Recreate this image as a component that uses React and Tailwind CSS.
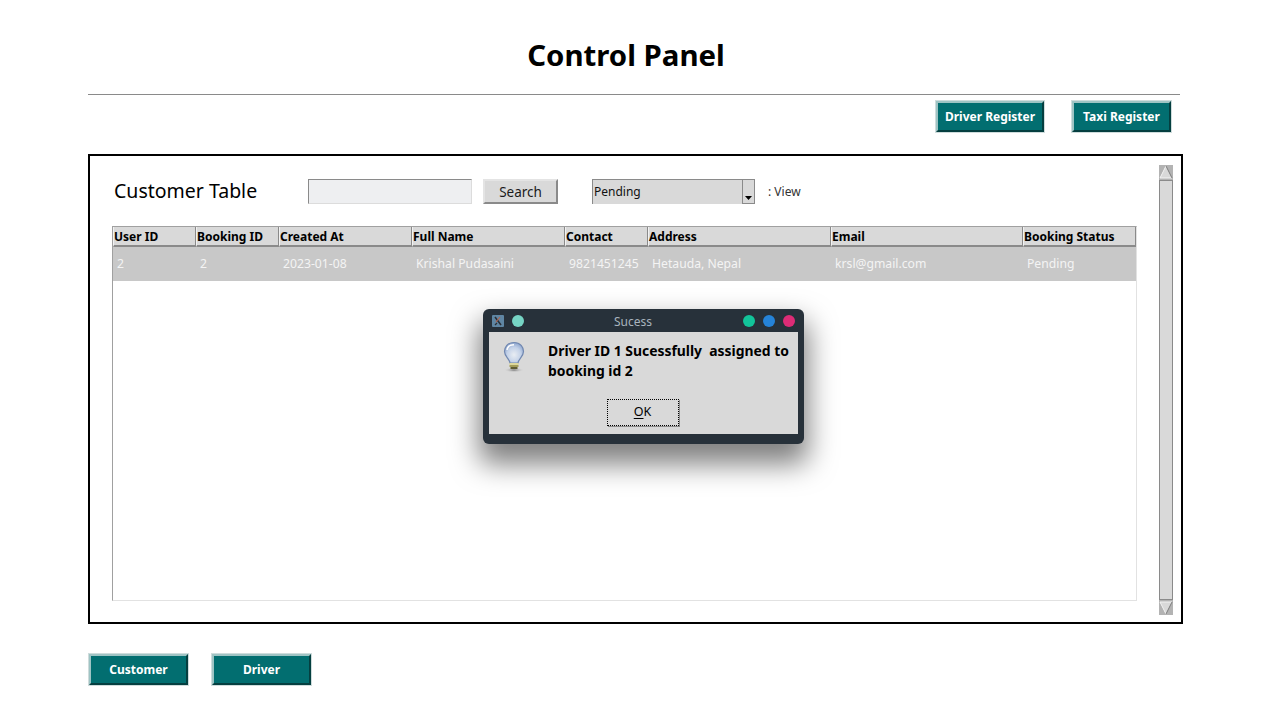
import React from 'react';

const columns = ['User ID', 'Booking ID', 'Created At', 'Full Name', 'Contact', 'Address', 'Email', 'Booking Status'];
const row = ['2', '2', '2023-01-08', 'Krishal Pudasaini', '9821451245', 'Hetauda, Nepal', 'krsl@gmail.com', 'Pending'];
const gridCols = 'grid grid-cols-[83px_83px_133px_153px_83px_183px_192px_113px]';

const TealButton = ({ children, className }) => (
  <button className={`h-[33px] border border-[#cfdcdc] text-[12px] font-bold text-white ${className}`}>
    <span className="flex h-full items-center justify-center border-2 border-t-[#9fc4c4] border-l-[#9fc4c4] border-r-[#053f40] border-b-[#053f40] bg-[#026e70]">
      {children}
    </span>
  </button>
);

const ArrowUp = () => (
  <svg width="14" height="15" viewBox="0 0 14 15" className="block">
    <rect width="14" height="15" fill="#b3b3b3" />
    <polygon points="7,1 13,13 1,13" fill="#d9d9d9" />
    <path d="M7 1 L1 13 H13" fill="none" stroke="#f4f4f4" strokeWidth="1" />
    <path d="M7 1 L13 13" fill="none" stroke="#7d7d7d" strokeWidth="1" />
  </svg>
);

const ArrowDown = () => (
  <svg width="14" height="15" viewBox="0 0 14 15" className="block">
    <rect width="14" height="15" fill="#b3b3b3" />
    <polygon points="1,2 13,2 7,14" fill="#d9d9d9" />
    <path d="M1 2 H13 M1 2 L7 14" fill="none" stroke="#f4f4f4" strokeWidth="1" />
    <path d="M13 2 L7 14" fill="none" stroke="#7d7d7d" strokeWidth="1" />
  </svg>
);

const Bulb = () => (
  <svg width="26" height="32" viewBox="0 0 26 32" className="block">
    <defs>
      <radialGradient id="glass" cx="0.5" cy="0.6" r="0.6">
        <stop offset="0" stopColor="#e9edf3" />
        <stop offset="0.6" stopColor="#c4d2e8" />
        <stop offset="1" stopColor="#8ea6cf" />
      </radialGradient>
      <radialGradient id="floor" cx="0.5" cy="0.5" r="0.5">
        <stop offset="0" stopColor="#777" />
        <stop offset="1" stopColor="#d8d8d8" stopOpacity="0" />
      </radialGradient>
    </defs>
    <ellipse cx="13" cy="29" rx="10" ry="2.5" fill="url(#floor)" />
    <path d="M13 1.5 C6.5 1.5 3.5 6 3.5 10.5 C3.5 15.5 8.5 17.5 9 22 H17 C17.5 17.5 22.5 15.5 22.5 10.5 C22.5 6 19.5 1.5 13 1.5 Z" fill="url(#glass)" stroke="#7188b0" strokeWidth="1.2" />
    <path d="M6 9 C6.5 5.5 9.5 3.8 13 3.8" fill="none" stroke="#ffffff" strokeWidth="1.4" />
    <rect x="8.5" y="22" width="9" height="2" fill="#ddd89a" />
    <rect x="8.5" y="24" width="9" height="2" fill="#a39d5a" />
    <rect x="9.5" y="26" width="7" height="2" fill="#5f5c34" />
  </svg>
);

const WindowIcon = () => (
  <svg width="12" height="12" viewBox="0 0 12 12" className="block">
    <rect width="12" height="12" rx="1" fill="#5f86a3" />
    <path d="M3 2 L9 10" stroke="#2b2f36" strokeWidth="1.6" />
    <path d="M8 2 L4 7" stroke="#b5654f" strokeWidth="1.2" />
    <path d="M3 10 L5 8" stroke="#2b2f36" strokeWidth="1.2" />
  </svg>
);

const SuccessDialog = () => (
  <div className="absolute left-[483px] top-[309px] flex h-[135px] w-[321px] flex-col rounded-[6px] bg-[#27313a] px-[6px] pb-[10px] shadow-[0_16px_28px_4px_rgba(0,0,0,0.5)]">
    <div className="relative flex h-[23px] shrink-0 items-center">
      <span className="ml-[3px]"><WindowIcon /></span>
      <span className="ml-[8px] h-[12px] w-[12px] rounded-full bg-[#76d4c4]" />
      <span className="absolute left-[125px] top-[4px] text-[12px] leading-[17px] text-[#a9b4bd]">Sucess</span>
      <div className="ml-auto mr-[3px] flex gap-[8px]">
        <span className="h-[12px] w-[12px] rounded-full bg-[#12c49a]" />
        <span className="h-[12px] w-[12px] rounded-full bg-[#2583d8]" />
        <span className="h-[12px] w-[12px] rounded-full bg-[#dd2c76]" />
      </div>
    </div>
    <div className="flex flex-1 flex-col bg-[#d9d9d9]">
      <div className="flex">
        <div className="ml-[12px] mt-[9px] w-[47px] shrink-0"><Bulb /></div>
        <p className="mt-[9px] whitespace-pre-wrap text-[13.9px] font-bold leading-[20px] text-black">
          {'Driver ID 1 Sucessfully  assigned to\nbooking id 2'}
        </p>
      </div>
      <button className="mx-auto mt-[18px] h-[27px] w-[72px] -translate-x-px border border-dotted border-black text-[12.5px] text-black shadow-[1px_1px_0_#8a8a8a]">
        <span className="underline underline-offset-2 decoration-1">O</span>K
      </button>
    </div>
  </div>
);

export default function App() {
  return (
    <div className="relative h-[720px] w-[1280px] overflow-hidden bg-white pl-[88px] font-['Noto_Sans',sans-serif] text-black">
      <h1 className="w-[1076px] pt-[34px] text-center text-[29.4px] font-bold leading-[42px]">Control Panel</h1>
      <div className="mt-[18px] h-px w-[1092px] bg-[#8a8a8a]" />

      <div className="mt-[5px] flex w-[1084px] justify-end gap-[26px]">
        <TealButton className="w-[110px]">Driver Register</TealButton>
        <TealButton className="w-[101px]">Taxi Register</TealButton>
      </div>

      <div className="mt-[21px] flex h-[470px] w-[1095px] border-2 border-black pl-[22px] pr-[8px] pt-[9px]">
        <div className="w-[1025px] shrink-0">
          <div className="mt-[14px] flex h-[25px] items-center">
            <span className="ml-[2px] w-[194px] pb-[2px] text-[19.5px] leading-[23px]">Customer Table</span>
            <div className="h-[25px] w-[164px] border border-t-[#8a8a8a] border-l-[#8a8a8a] border-r-[#dcdcdc] border-b-[#dcdcdc] bg-[#eeeff1]" />
            <button className="ml-[11px] h-[25px] w-[75px] border-2 border-t-[#e4e4e4] border-l-[#e4e4e4] border-r-[#8a8a8a] border-b-[#8a8a8a] bg-[#d9d9d9] pt-[3px] text-[13.5px] leading-none text-[#1a1a1a]">Search</button>
            <div className="ml-[34px] flex h-[25px] w-[163px] border-l border-t border-[#8a8a8a] bg-[#d9d9d9]">
              <span className="flex-1 pl-[1px] text-[12px] leading-[24px] text-[#111]">Pending</span>
              <div className="flex h-[24px] w-[13px] justify-center border-l border-r border-b border-[#8a8a8a] pt-[16px]">
                <svg width="7" height="4" viewBox="0 0 7 4" className="block">
                  <polygon points="0,0 7,0 3.5,4" fill="#000" />
                </svg>
              </div>
            </div>
            <span className="ml-[13px] text-[12px] text-[#333]">: View</span>
          </div>

          <div className="mt-[22px] h-[375px] border border-t-[#a0a0a0] border-l-[#a0a0a0] border-r-[#e2e2e2] border-b-[#e2e2e2] bg-white">
            <div className={gridCols}>
              {columns.map((name) => (
                <div key={name} className="h-[20px] border-l border-r border-b-2 border-l-[#f2f2f2] border-r-[#8a8a8a] border-b-[#8a8a8a] bg-[#d9d9d9] text-[12px] font-bold leading-[19px]">
                  {name}
                </div>
              ))}
            </div>
            <div className={`${gridCols} h-[34px] bg-[#c8c8c8] text-[12.2px] leading-[33px] text-[#f4f4f4]`}>
              {row.map((value, i) => (
                <div key={i} className="pl-[4px]">{value}</div>
              ))}
            </div>
          </div>
        </div>

        <div className="ml-[22px] flex h-[450px] w-[14px] shrink-0 flex-col border-x border-[#8a8a8a] bg-[#d9d9d9]">
          <div className="-mx-px shrink-0"><ArrowUp /></div>
          <div className="flex-1 border-y border-[#8a8a8a]" />
          <div className="-mx-px shrink-0"><ArrowDown /></div>
        </div>
      </div>

      <div className="mt-[29px] flex gap-[22px]">
        <TealButton className="w-[101px]">Customer</TealButton>
        <TealButton className="w-[101px]">Driver</TealButton>
      </div>

      <SuccessDialog />
    </div>
  );
}
